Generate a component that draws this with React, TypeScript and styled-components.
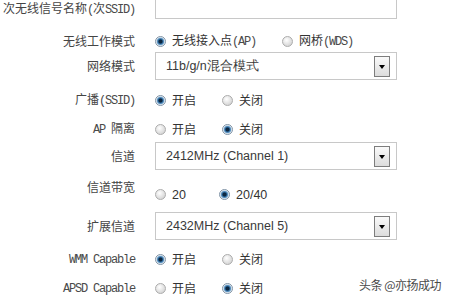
import styled, { createGlobalStyle } from "styled-components"

type Opt = { text: React.ReactNode; checked?: boolean }

function Choice({ options, $align }: { options: Opt[]; $align?: "center" | "end" }) {
  return (
    <Options $align={$align}>
      {options.map((o, i) => (
        <Option key={i}>
          <Radio $checked={!!o.checked} />
          <OptText>{o.text}</OptText>
        </Option>
      ))}
    </Options>
  )
}

function Dropdown({ value }: { value: string }) {
  return (
    <Select>
      <SelectText>{value}</SelectText>
      <ArrowButton />
    </Select>
  )
}

function App() {
  return (
    <Page>
      <GlobalStyles />
      <Form>
        <Row $gap={0} $h={28}>
          <Label $align="end">次无线信号名称<Mono>(</Mono>次<Mono>SSID)</Mono></Label>
          <TextInput />
        </Row>
        <Row $gap={14} $h={16}>
          <Label>无线工作模式</Label>
          <Choice options={[
            { text: <>无线接入点<Mono>(AP)</Mono></>, checked: true },
            { text: <>网桥<Mono>(WDS)</Mono></> },
          ]} />
        </Row>
        <Row $gap={3} $h={28}>
          <Label>网络模式</Label>
          <Dropdown value="11b/g/n混合模式" />
        </Row>
        <Row $gap={12} $h={16}>
          <Label>广播<Mono>(SSID)</Mono></Label>
          <Choice options={[{ text: "开启", checked: true }, { text: "关闭" }]} />
        </Row>
        <Row $gap={13} $h={16}>
          <Label><Mono>AP </Mono>隔离</Label>
          <Choice options={[{ text: "开启" }, { text: "关闭", checked: true }]} />
        </Row>
        <Row $gap={5} $h={28}>
          <Label>信道</Label>
          <Dropdown value="2412MHz (Channel 1)" />
        </Row>
        <Row $gap={10} $h={22}>
          <Label $align="start">信道带宽</Label>
          <Choice $align="end" options={[
            { text: <Latin>20</Latin> },
            { text: <Latin>20/40</Latin>, checked: true },
          ]} />
        </Row>
        <Row $gap={10} $h={28}>
          <Label>扩展信道</Label>
          <Dropdown value="2432MHz (Channel 5)" />
        </Row>
        <Row $gap={11} $h={16}>
          <Label><Mono>WMM Capable</Mono></Label>
          <Choice options={[{ text: "开启", checked: true }, { text: "关闭" }]} />
        </Row>
        <Row $gap={13} $h={16}>
          <Label><Mono>APSD Capable</Mono></Label>
          <Choice options={[{ text: "开启" }, { text: "关闭", checked: true }]} />
        </Row>
      </Form>
      <Watermark>头条 @亦扬成功</Watermark>
    </Page>
  )
}

const Page = styled.div`
  position: relative;
  width: 450px;
  height: 300px;
  overflow: hidden;
  background: #fff;
`

const Form = styled.div`
  display: flex;
  flex-direction: column;
  margin-top: -9px;
`

const Row = styled.div<{ $gap: number; $h: number }>`
  display: grid;
  grid-template-columns: 135px 242px;
  column-gap: 20px;
  height: ${p => p.$h}px;
  margin-top: ${p => p.$gap}px;
  align-items: center;
`

const Label = styled.div<{ $align?: "start" | "end" }>`
  text-align: right;
  font-size: 12px;
  line-height: 14px;
  color: #454545;
  white-space: nowrap;
  align-self: ${p => p.$align ?? "center"};
  margin-bottom: ${p => (p.$align === "end" ? "2px" : "0")};
`

const Mono = styled.span`
  font-family: "Liberation Mono", monospace;
  font-size: 12px;
  letter-spacing: -1.2px;
  color: #4a4a4a;
`

const Latin = styled.span`
  font-family: "Liberation Sans", Arial, sans-serif;
  font-size: 12.5px;
`

const Options = styled.div<{ $align?: "center" | "end" }>`
  display: flex;
  align-items: center;
  height: 16px;
  align-self: ${p => p.$align ?? "center"};
`

const Option = styled.label`
  display: flex;
  align-items: center;
  min-width: 64px;
  padding-right: 26px;
`

const Radio = styled.span<{ $checked: boolean }>`
  width: 11px;
  height: 11px;
  border-radius: 50%;
  margin-right: 6px;
  flex: none;
  border: 1px solid ${p => (p.$checked ? "#7f93a6" : "#acacac")};
  background: ${p =>
    p.$checked
      ? "radial-gradient(circle at 50% 50%, #0d2740 0 1.6px, #2f6a9c 2.4px, #6ea3cf 3.4px, #e9eef2 4.2px)"
      : "radial-gradient(circle at 40% 35%, #ffffff 0, #e6e6e6 45%, #c9c9c9 100%)"};
`

const OptText = styled.span`
  font-size: 12px;
  line-height: 14px;
  color: #333;
  white-space: nowrap;
`

const TextInput = styled.div`
  height: 28px;
  border: 1px solid #c8c8c8;
  background: #fff;
`

const Select = styled.div`
  height: 28px;
  border: 1px solid #c8c8c8;
  display: flex;
  align-items: flex-start;
  padding-left: 10px;
  padding-right: 6px;
`

const SelectText = styled.span`
  font-family: "Liberation Sans", Arial, sans-serif;
  font-size: 12.5px;
  line-height: 26px;
  color: #3a3a3a;
`

const ArrowButton = styled.span`
  margin-left: auto;
  margin-top: 3px;
  width: 16px;
  height: 21px;
  border: 1px solid #7d7d7d;
  background: linear-gradient(#fafafa, #dcdcdc);
  display: flex;
  align-items: center;
  justify-content: center;

  &::after {
    content: "";
    border-left: 3.5px solid transparent;
    border-right: 3.5px solid transparent;
    border-top: 4px solid #000;
  }
`

const Watermark = styled.div`
  position: absolute;
  right: 9px;
  top: 277px;
  font-size: 12px;
  line-height: 16px;
  letter-spacing: -0.5px;
  color: #4a4a4a;
  text-shadow: 0 0 2px #fff, 0 0 1px #fff;
`

const GlobalStyles = createGlobalStyle`
  html, body {
    margin: 0;
    padding: 0;
    background: #fff;
  }
  body {
    font-family: "Noto Sans CJK SC", "Liberation Sans", sans-serif;
    overflow: hidden;
  }
  * {
    box-sizing: border-box;
  }
`

export default App
